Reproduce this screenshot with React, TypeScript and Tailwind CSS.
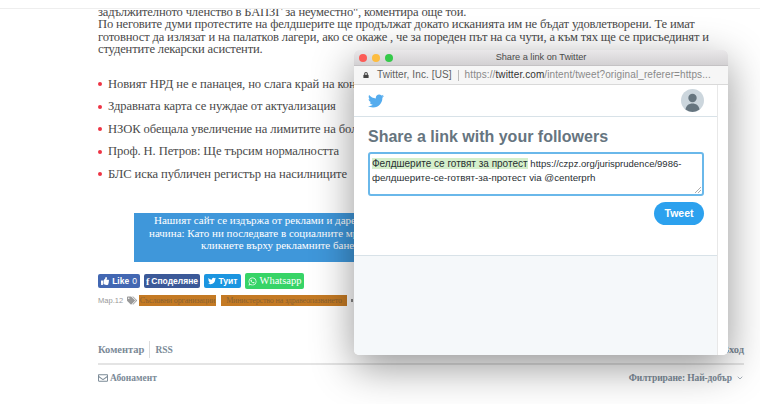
import { ChevronDown } from 'lucide-react';
import { FaLock, FaRegEnvelope, FaTags, FaThumbsUp, FaTwitter, FaWhatsapp } from 'react-icons/fa';

const related = [
  'Новият НРД не е панацея, но слага край на конфликтите в системата',
  'Здравната карта се нуждае от актуализация',
  'НЗОК обещала увеличение на лимитите на болниците',
  'Проф. Н. Петров: Ще търсим нормалността',
  'БЛС иска публичен регистър на насилниците',
];

function ShareWindow() {
  return (
    <div className="absolute left-[354px] top-[50px] z-20 flex h-[305px] w-[374px] flex-col overflow-hidden rounded-[5px] bg-white shadow-[0_12px_42px_rgba(0,0,0,0.42)] font-['Liberation_Sans',sans-serif]">
      {/* Title bar */}
      <div className="relative flex h-[16px] items-center justify-center border-b border-[#c4c2c4] bg-gradient-to-b from-[#e9e7e9] to-[#d3d1d3]">
        <div className="absolute left-[5px] top-[4px] flex gap-[5px]">
          <span className="h-[8px] w-[8px] rounded-full bg-[#fc5b57]" />
          <span className="h-[8px] w-[8px] rounded-full bg-[#fdbc40]" />
          <span className="h-[8px] w-[8px] rounded-full bg-[#35c94a]" />
        </div>
        <span className="text-[9.2px] leading-none text-[#4a4a4a]">Share a link on Twitter</span>
      </div>

      {/* Address bar */}
      <div className="flex h-[19px] items-center border-b border-[#d9d9d9] bg-[#f6f6f6] pl-[9px] text-[10px] leading-none tracking-[0.1px] text-[#5f5f5f]">
        <FaLock className="mr-[8px] h-[6px] w-[6px] text-[#444]" />
        <span>Twitter, Inc. [US]</span>
        <span className="mx-[6px] h-[11px] w-px bg-[#bbb]" />
        <span className="whitespace-nowrap text-[#8a8a8a]">
          https://<span className="text-[#333]">twitter.com</span>/intent/tweet?original_referer=https...
        </span>
      </div>

      <div className="flex min-h-0 flex-1">
        <div className="flex w-[364px] flex-col border-r border-[#e8e8e8]">
          {/* Twitter header */}
          <div className="flex h-[32px] items-center justify-between border-b border-[#d8e2e8] pl-[14px] pr-[13px]">
            <FaTwitter className="h-[16px] w-[16px] text-[#55acee]" />
            <svg viewBox="0 0 23 23" className="h-[23px] w-[23px]">
              <circle cx="11.5" cy="11.5" r="11.5" fill="#ccd6dd" />
              <circle cx="11.5" cy="9" r="4.2" fill="#66757f" />
              <path d="M4.5 20.5c.6-4 3.400-6 7-6s6.400 2 7 6a11.500 11.500 0 0 1-14 0z" fill="#66757f" />
            </svg>
          </div>

          {/* Composer */}
          <div className="flex h-[139px] flex-col border-b border-[#d8e2e8] pl-[14px] pr-[13px] pt-[11px]">
            <h1 className="text-[16px] font-bold leading-[18px] text-[#66757f]">Share a link with your followers</h1>
            <div className="relative mt-[6px] h-[44px] w-[336px] whitespace-nowrap rounded-[3px] border-2 border-[#6ab8ea] pl-[2px] pt-[3px] text-[10px] leading-[14px] text-[#292f33]">
              <span className="bg-[#d5efcb]">Фелдшерите се готвят за протест</span>{' '}
              <span className="text-[9.5px]">https://czpz.org/jurisprudence/9986-</span>
              <br />
              <span className="text-[9.75px]">фелдшерите-се-готвят-за-протест via @centerprh</span>
              <svg viewBox="0 0 6 6" className="absolute bottom-[1px] right-[1px] h-[6px] w-[6px]">
                <path d="M0 6L6 0M3 6L6 3" stroke="#8a8a8a" strokeWidth="0.7" />
              </svg>
            </div>
            <div className="mt-[6px] flex justify-end">
              <span className="flex h-[23px] w-[50px] items-center justify-center rounded-full bg-[#2ca1ee] text-[10.5px] font-bold text-white">
                Tweet
              </span>
            </div>
          </div>
          <div className="flex-1 bg-[#f5f8fa]" />
        </div>
        <div className="flex-1 bg-white" />
      </div>
    </div>
  );
}

export default function App() {
  return (
    <div className="relative h-[404px] w-[760px] overflow-hidden bg-white font-['Liberation_Serif',serif] text-[#4a4a4a]">
      <div className="relative z-10 h-[9px] border-b border-[#eee] bg-white" />

      <main className="ml-[98px] mr-[16px] -mt-[3px]">
        {/* Article text */}
        <p className="whitespace-nowrap text-[12.6px] leading-[12.3px] tracking-[-0.17px]">
          задължителното членство в БАПЗГ за неуместно", коментира още той.
          <br />
          По неговите думи протестите на фелдшерите ще продължат докато исканията им не бъдат удовлетворени. Те имат
          <br />
          готовност да излязат и на палатков лагери, ако се окаже , че за пореден път на са чути, а към тях ще се присъединят и
          <br />
          студентите лекарски асистенти.
        </p>

        {/* Related links */}
        <ul className="mt-[23px] flex flex-col gap-[10px]">
          {related.map((item) => (
            <li key={item} className="flex h-[12.4px] items-center whitespace-nowrap text-[12.6px] leading-none tracking-[-0.1px]">
              <span className="mr-[6px] h-[4px] w-[4px] rounded-full bg-[#ee3344]" />
              {item}
            </li>
          ))}
        </ul>

        {/* Support box */}
        <div className="ml-[36px] mt-[33px] h-[49px] w-[340px] overflow-hidden whitespace-nowrap bg-[#3f97da] pl-[15px] text-[11px] leading-[12.5px] text-white">
          <div className="pt-[1px]">
            <div className="pl-[5px]">Нашият сайт се издържа от реклами и дарения</div>
            <div>начина: Като ни последвате в социалните мрежи</div>
            <div className="pl-[52px]">кликнете върху рекламните банери</div>
          </div>
        </div>

        {/* Share buttons */}
        <div className="mt-[11px] flex items-center text-[8.5px] font-bold text-white font-['Liberation_Sans',sans-serif]">
          <span className="flex h-[14px] w-[42px] items-center justify-center gap-[3px] rounded-[2px] bg-[#4267b2]">
            <FaThumbsUp className="h-[8px] w-[8px]" /> Like <span className="font-normal">0</span>
          </span>
          <span className="ml-[4px] flex h-[14px] w-[56px] items-center justify-center gap-[2px] rounded-[2px] bg-[#3b5998]">
            <span className="font-['Liberation_Serif',serif] text-[10px]">f</span> Споделяне
          </span>
          <span className="ml-[4px] flex h-[14px] w-[37px] items-center justify-center gap-[3px] rounded-[2px] bg-[#1b95e0]">
            <FaTwitter className="h-[8px] w-[8px]" /> Туит
          </span>
          <span className="ml-[4px] flex h-[16px] w-[59px] items-center justify-center gap-[3px] rounded-[2px] bg-[#37d467] font-['Liberation_Serif',serif] text-[10.5px] font-normal">
            <FaWhatsapp className="h-[9px] w-[9px]" /> Whatsapp
          </span>
        </div>

        {/* Date and tags */}
        <div className="mt-[6px] flex h-[11px] items-center whitespace-nowrap leading-none">
          <span className="w-[25px] font-['Liberation_Sans',sans-serif] text-[7.5px] text-[#999]">Мар.12</span>
          <FaTags className="ml-[4px] h-[9px] w-[10px] text-[#999]" />
          <span className="ml-[2px] flex h-[11px] w-[77px] items-center justify-center bg-[#c47a24] text-[8px] tracking-[-0.15px] text-[#8a6233]">Съсловни организации</span>
          <span className="ml-[5px] flex h-[11px] w-[126px] items-center justify-center bg-[#c47a24] text-[8px] tracking-[-0.15px] text-[#8a6233]">Министерство на здравеопазването</span>
          <span className="ml-[4px] h-[3px] w-[2px] bg-[#888]" />
        </div>

        {/* Comments */}
        <div className="mt-[32px] flex h-[27px] items-center justify-between border-b-2 border-[#e4e4e4] pb-[2px] text-[10.5px] font-bold text-[#7b8a97]">
          <div className="flex items-center">
            <span>Коментар</span>
            <span className="mx-[5px] h-[17px] w-px bg-[#ddd]" />
            <span className="text-[9.5px]">RSS</span>
          </div>
          <span>Вход</span>
        </div>
        <div className="mt-[6px] flex items-center justify-between text-[9.5px] font-bold text-[#7b8a97]">
          <div className="flex items-center gap-[2px]">
            <FaRegEnvelope className="h-[10px] w-[10px]" />
            <span>Абонамент</span>
          </div>
          <div className="flex items-center gap-[4px]">
            <span className="tracking-[-0.1px]">Филтриране: Най-добър</span>
            <ChevronDown className="h-[8px] w-[8px]" />
          </div>
        </div>
      </main>

      <ShareWindow />
    </div>
  );
}
